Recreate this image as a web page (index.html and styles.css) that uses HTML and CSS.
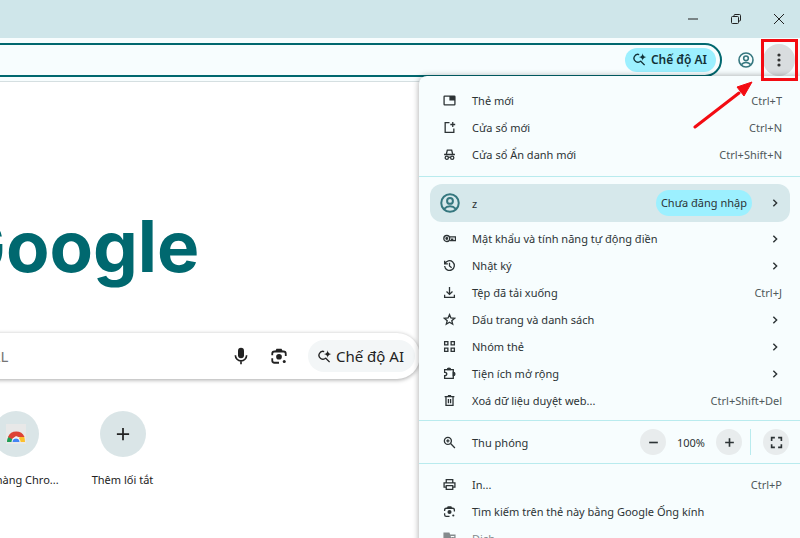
FILE: index.html
```html
<!DOCTYPE html>
<html lang="vi">
<head>
  <meta charset="UTF-8" />
  <meta name="viewport" content="width=device-width, initial-scale=1.0" />
  <title>Thẻ mới</title>
  <link rel="stylesheet" href="styles.css">
</head>
<body>

  <!-- Shared icons -->
  <svg class="sprite" aria-hidden="true">
    <symbol id="ai" viewBox="0 0 24 24">
      <path d="M11.5 4.2A6.2 6.2 0 1 0 14 14.2M13.6 14.4l6.6 6.6" fill="none" stroke="currentColor" stroke-width="2.2" />
      <path d="M17 2q.6 5.4 6 6-5.4.6-6 6-.6-5.4-6-6 5.4-.6 6-6z" fill="currentColor" />
    </symbol>
    <symbol id="user" viewBox="0 0 24 24">
      <g fill="none" stroke="currentColor" stroke-width="2.4">
        <circle cx="12" cy="12" r="10.5" />
        <circle cx="12" cy="9.5" r="3.5" />
        <path d="M5 19q3-3.2 7-3.2t7 3.2" />
      </g>
    </symbol>
    <symbol id="lens" viewBox="0 0 24 24">
      <path d="M3 11V9a3 3 0 0 1 3-3h12a3 3 0 0 1 3 3v3M3 15v3a3 3 0 0 0 3 3h6M8 6l1.4-2.6h5.2L16 6" fill="none" stroke="currentColor" stroke-width="2.4" />
      <circle cx="12" cy="13" r="3.8" fill="currentColor" stroke="none" />
      <circle cx="19" cy="19.4" r="2" fill="currentColor" stroke="none" />
    </symbol>
    <symbol id="chevron" viewBox="0 0 24 24">
      <path d="M8 4l8 8-8 8" fill="none" stroke="currentColor" stroke-width="3.4" />
    </symbol>
  </svg>

  <header class="titlebar">
    <button aria-label="Thu nhỏ"><svg viewBox="0 0 12 12"><path d="M1 6h10" /></svg></button>
    <button aria-label="Khôi phục"><svg viewBox="0 0 12 12"><rect x="1.5" y="3.5" width="7" height="7" rx="1" /><path d="M4 3V2.500q0-1 1-1h4.500q1 0 1 1V7q0 1-1 1H9" /></svg></button>
    <button aria-label="Đóng"><svg viewBox="0 0 12 12"><path d="M1 1l10 10M11 1L1 11" /></svg></button>
  </header>

  <div class="toolbar">
    <div class="omnibox">
      <input type="text" aria-label="Thanh địa chỉ" />
      <button class="ai-chip"><svg><use href="#ai" /></svg>Chế độ AI</button>
    </div>
    <button class="profile-button" aria-label="Hồ sơ"><svg><use href="#user" /></svg></button>
    <button class="more-button" aria-label="Tuỳ chỉnh">
      <svg viewBox="0 0 16 16"><circle cx="8" cy="3" r="1.600" /><circle cx="8" cy="8" r="1.600" /><circle cx="8" cy="13" r="1.600" /></svg>
    </button>
  </div>

  <main class="new-tab">
    <div class="logo">Google</div>
    <div class="search">
      <input type="text" placeholder="Tìm kiếm trên Google hoặc nhập một URL" aria-label="Tìm kiếm" />
      <button aria-label="Giọng nói"><svg viewBox="0 0 24 24"><rect x="8" y="1" width="8" height="14" rx="4" fill="currentColor" /><path d="M4.500 11a7.500 7.500 0 0 0 15 0M12 18.500V23" fill="none" stroke="currentColor" stroke-width="2.200" /></svg></button>
      <button aria-label="Ống kính"><svg><use href="#lens" /></svg></button>
      <button class="search-ai"><svg><use href="#ai" /></svg>Chế độ AI</button>
    </div>
    <div class="shortcuts">
      <a href="#">
        <span class="tile">
          <svg class="store" viewBox="0 0 20 20">
            <rect width="20" height="20" fill="#e8e8e8" />
            <path d="M1 18a9 9 0 0 1 3-7l4 7z" fill="#1e9e55" />
            <path d="M12 18l2-6h4q1 3 1 6z" fill="#fbc02d" />
            <path d="M2 13a9 9 0 0 1 16.500 0h-6l-2.500-1-4 3z" fill="#dd4335" />
            <path d="M5.500 18a4.500 4.500 0 0 1 9 0z" fill="#fff" />
            <path d="M6.500 18a3.500 3.500 0 0 1 7 0z" fill="#4285f4" />
          </svg>
        </span>
        <span class="tile-label">Cửa hàng Chro...</span>
      </a>
      <a href="#">
        <span class="tile"><svg viewBox="0 0 16 16"><path d="M8 1v14M1 8h14" stroke="currentColor" stroke-width="2" /></svg></span>
        <span class="tile-label">Thêm lối tắt</span>
      </a>
    </div>
  </main>

  <nav class="menu">
    <div class="group">
      <button class="item"><svg viewBox="0 0 24 24"><rect x="2" y="4" width="20" height="16" rx="1" /><path d="M13 5h8v6h-8z" fill="currentColor" /></svg>Thẻ mới<kbd>Ctrl+T</kbd></button>
      <button class="item"><svg viewBox="0 0 24 24"><path d="M12 3H4v18h16v-7M18 2v9M13.500 6.500h9" /></svg>Cửa sổ mới<kbd>Ctrl+N</kbd></button>
      <button class="item"><svg viewBox="0 0 24 24"><path d="M2 12h20M6 12l2-8h8l2 8M10 17.500q2-1.500 4 0" /><circle cx="7" cy="18" r="3" /><circle cx="17" cy="18" r="3" /></svg>Cửa sổ Ẩn danh mới<kbd>Ctrl+Shift+N</kbd></button>
    </div>

    <div class="group">
      <button class="account">
        <svg class="avatar"><use href="#user" /></svg>
        <span>z</span>
        <span class="status">Chưa đăng nhập</span>
        <svg class="chevron"><use href="#chevron" /></svg>
      </button>
      <button class="item"><svg viewBox="0 0 24 24"><circle cx="7" cy="12" r="5.500" /><circle cx="7" cy="12" r="1.500" fill="currentColor" /><path d="M12.500 9H23v7h-5v-3h-2v3h-3" /></svg>Mật khẩu và tính năng tự động điền<svg class="chevron"><use href="#chevron" /></svg></button>
      <button class="item"><svg viewBox="0 0 24 24"><path d="M3 3v6h6M3.500 9A9 9 0 1 1 3 13M12 7v6l4 3" /></svg>Nhật ký<svg class="chevron"><use href="#chevron" /></svg></button>
      <button class="item"><svg viewBox="0 0 24 24"><path d="M12 2v13M6.500 10l5.500 5.500 5.500-5.500M3 16v5h18v-5" /></svg>Tệp đã tải xuống<kbd>Ctrl+J</kbd></button>
      <button class="item"><svg viewBox="0 0 24 24"><path d="M12 3l2.600 6.200 6.800.5-5.200 4.400 1.700 6.600-5.900-3.600-5.900 3.600 1.700-6.600-5.200-4.400 6.800-.5z" /></svg>Dấu trang và danh sách<svg class="chevron"><use href="#chevron" /></svg></button>
      <button class="item"><svg viewBox="0 0 24 24"><path d="M3 3h6v6H3zM15 3h6v6h-6zM3 15h6v6H3zM15 15h6v6h-6z" /></svg>Nhóm thẻ<svg class="chevron"><use href="#chevron" /></svg></button>
      <button class="item"><svg viewBox="0 0 24 24"><path d="M3 5h16v16H3v-5q4 0 4-3t-4-3z" /><path d="M8 5a3 3 0 0 1 6 0zM19 10a3 3 0 0 1 0 6z" fill="currentColor" /></svg>Tiện ích mở rộng<svg class="chevron"><use href="#chevron" /></svg></button>
      <button class="item"><svg viewBox="0 0 24 24"><path d="M3 5h18M9 3h6M5.500 5v16h13V5M10 9v8M14 9v8" /></svg>Xoá dữ liệu duyệt web...<kbd>Ctrl+Shift+Del</kbd></button>
    </div>

    <div class="group zoom">
      <svg viewBox="0 0 24 24"><circle cx="9" cy="9" r="6.500" /><path d="M14 14l8 8M9 6v6M6 9h6" /></svg>
      <span class="zoom-label">Thu phóng</span>
      <button aria-label="Thu nhỏ"><svg viewBox="0 0 24 24"><path d="M4 12h16" /></svg></button>
      <span class="zoom-value">100%</span>
      <button aria-label="Phóng to"><svg viewBox="0 0 24 24"><path d="M4 12h16M12 4v16" /></svg></button>
      <span class="divider"></span>
      <button aria-label="Toàn màn hình"><svg viewBox="0 0 24 24"><path d="M3 9V3h6M15 3h6v6M21 15v6h-6M9 21H3v-6" /></svg></button>
    </div>

    <div class="group">
      <button class="item"><svg viewBox="0 0 24 24"><path d="M6 8V3h12v5M6 17H2V9h20v8h-4M6 14h12v7H6z" /></svg>In...<kbd>Ctrl+P</kbd></button>
      <button class="item"><svg><use href="#lens" /></svg>Tìm kiếm trên thẻ này bằng Google Ống kính</button>
      <button class="item faded"><svg viewBox="0 0 24 24"><path d="M2 2h9l5 15H2z" fill="currentColor" /><path d="M12 6h10v16H12M15 11h6M18 9v2" /></svg>Dịch...</button>
    </div>
  </nav>

  <!-- Callout -->
  <div class="highlight"></div>
  <svg class="arrow" viewBox="0 0 60 48">
    <path d="M2 46L46 12" stroke="#f30b12" stroke-width="3" stroke-linecap="round" />
    <path d="M59 1L51 15 44 6z" fill="#f30b12" stroke="#f30b12" />
  </svg>

</body>
</html>
```
FILE: styles.css
```css
*, *::before, *::after {
  box-sizing: border-box;
}

:root {
  --teal: #00686f;
  --bar: #cfe6ea;
  --surface: #f7fdfe;
  --tile: #dae5e7;
  --cyan: #9cf0ff;
  --line: #b9ebee;
  --text: #2c3335;
}

html, body {
  margin: 0;
  height: 100%;
  overflow: hidden;
}

body {
  position: relative;
  font-family: "Noto Sans", "Open Sans", sans-serif;
  font-size: 11px;
  color: var(--text);
  background: #fff;
}

button, input {
  font: inherit;
  color: inherit;
  border: 0;
  padding: 0;
  background: none;
}

button {
  cursor: pointer;
}

svg {
  display: block;
  flex: none;
}

.sprite {
  position: absolute;
  width: 0;
  height: 0;
}

/* Window frame */
.titlebar {
  display: flex;
  justify-content: flex-end;
  height: 38px;
  background: var(--bar);
}

.titlebar button {
  display: grid;
  place-items: center;
  width: 43px;
}

.titlebar svg {
  width: 12px;
  height: 12px;
  fill: none;
  stroke: #222;
}

.toolbar {
  display: flex;
  align-items: center;
  height: 44px;
  padding-right: 5px;
  background: var(--surface);
  border-bottom: 1px solid #d5dfe1;
}

.omnibox {
  flex: 1;
  display: flex;
  align-items: center;
  height: 34px;
  margin-left: -24px;
  padding-right: 4px;
  border: 2px solid var(--teal);
  border-radius: 17px;
}

.omnibox input {
  flex: 1;
  outline: 0;
}

.ai-chip {
  display: flex;
  align-items: center;
  gap: 4px;
  height: 24px;
  padding: 0 9px 0 7px;
  border-radius: 12px;
  background: var(--cyan);
  font-size: 12px;
  font-weight: 600;
  color: #123238;
}

.ai-chip svg {
  width: 15px;
  height: 15px;
}

.profile-button {
  margin: 0 9px 0 16px;
  color: #35777f;
}

.profile-button svg {
  width: 16px;
  height: 16px;
}

.more-button {
  display: grid;
  place-items: center;
  width: 32px;
  height: 32px;
  border-radius: 50%;
  background: #d9dddf;
}

.more-button svg {
  width: 16px;
  height: 16px;
  fill: #333;
}

/* New tab page */
.new-tab {
  display: flex;
  flex-direction: column;
  align-items: center;
  width: 720px;
  margin-left: -300px;
  padding-top: 108px;
}

.logo {
  padding-left: 32px;
  font-family: Inter, sans-serif;
  font-size: 71px;
  font-weight: 700;
  line-height: 112px;
  color: var(--teal);
}

.search {
  display: flex;
  align-items: center;
  align-self: stretch;
  height: 46px;
  margin-top: 31px;
  padding: 0 5px 0 14px;
  border-radius: 23px;
  background: #fff;
  box-shadow: 0 1px 4px rgba(0, 0, 0, 0.35);
  font-size: 15px;
}

.search input {
  flex: 1;
  outline: 0;
}

.search input::placeholder {
  color: #757575;
}

.search button {
  display: flex;
  align-items: center;
  gap: 4px;
  margin-right: 20px;
  color: #222;
}

.search svg {
  width: 18px;
  height: 18px;
}

.search .search-ai {
  height: 32px;
  margin-right: 0;
  padding: 0 11px 0 9px;
  border-radius: 16px;
  background: #f3f6f7;
}

.search .search-ai svg {
  width: 15px;
  height: 15px;
}

.shortcuts {
  display: flex;
  gap: 20px;
  margin: 32px 0 0 18px;
}

.shortcuts a {
  display: flex;
  flex-direction: column;
  align-items: center;
  gap: 15px;
  width: 87px;
  color: #222;
  text-decoration: none;
  white-space: nowrap;
}

.tile {
  display: grid;
  place-items: center;
  width: 46px;
  height: 46px;
  border-radius: 50%;
  background: var(--tile);
}

.tile svg {
  width: 14px;
  height: 14px;
}

.tile .store {
  width: 20px;
  height: 20px;
}

/* Browser menu */
.menu {
  position: absolute;
  top: 76px;
  right: 0;
  width: 381px;
  border-radius: 8px 0 0 0;
  background: var(--surface);
  box-shadow: 0 0 6px rgba(0, 0, 0, 0.35);
}

.group {
  padding: 7px 0 6px;
}

.group:first-child {
  padding: 11px 0 8px;
}

.group + .group {
  border-top: 1px solid var(--line);
}

.item {
  display: flex;
  align-items: center;
  width: 100%;
  height: 27px;
  padding: 0 18px 0 24px;
  text-align: left;
}

.menu svg {
  width: 13px;
  height: 13px;
  fill: none;
  stroke: currentColor;
  stroke-width: 2.4;
}

.item > svg:first-child {
  margin-right: 16px;
}

.menu .chevron {
  width: 10px;
  height: 10px;
  margin: 0 2px 0 auto;
}

.item kbd {
  margin-left: auto;
  font: inherit;
  color: #50595b;
}

.faded {
  color: #858b8d;
}

.account {
  display: flex;
  align-items: center;
  width: 360px;
  height: 38px;
  margin: 0 0 3px 11px;
  padding: 0 8px 0 10px;
  border-radius: 12px;
  background: #d6e8eb;
}

.menu .avatar {
  width: 20px;
  height: 20px;
  margin-right: 12px;
  color: #35777f;
}

.status {
  margin-left: auto;
  padding: 0 5px;
  border-radius: 13px;
  background: var(--cyan);
  line-height: 26px;
}

.account .chevron {
  margin: 0 2px 0 18px;
}

.zoom {
  display: flex;
  align-items: center;
  height: 43px;
  padding: 0 11px 0 24px;
}

.zoom-label {
  flex: 1;
  margin-left: 16px;
}

.zoom button {
  display: grid;
  place-items: center;
  width: 26px;
  height: 26px;
  border-radius: 50%;
  background: #e8eced;
}

.zoom button svg {
  stroke-width: 3;
}

.zoom-value {
  width: 50px;
  text-align: center;
}

.divider {
  width: 1px;
  height: 26px;
  margin: 0 12px 0 8px;
  background: var(--line);
}

/* Callout */
.highlight {
  position: absolute;
  top: 39px;
  right: 2px;
  width: 37px;
  height: 42px;
  border: 3px solid #f30b12;
}

.arrow {
  position: absolute;
  top: 81px;
  right: 47px;
  width: 60px;
  height: 48px;
}
```
